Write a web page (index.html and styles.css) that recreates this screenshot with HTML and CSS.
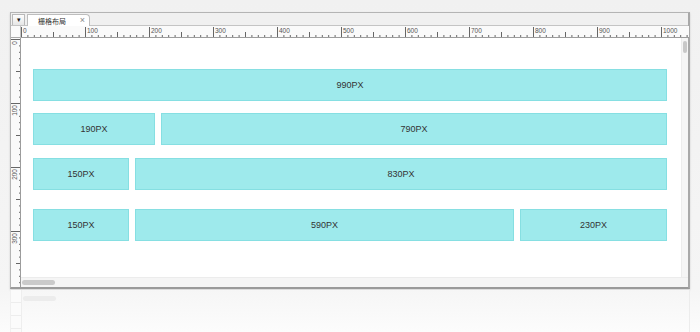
FILE: index.html
```html
<!DOCTYPE html>
<html lang="zh">
<head>
    <meta charset="UTF-8">
    <title>栅格布局</title>
    <link rel="stylesheet" href="styles.css">
</head>
<body>
    <div class="window">
        <div class="tabbar">
            <div class="tab-menu">&#9662;</div>
            <div class="tab">
                <span class="tab-title">栅格布局</span>
                <span class="tab-close">&times;</span>
            </div>
        </div>

        <div class="editor">
            <div class="corner"></div>

            <!-- top ruler: 0.64px per unit -->
            <svg class="ruler-top" width="668" height="12">
                <defs>
                    <pattern id="tickTop" width="64" height="12" patternUnits="userSpaceOnUse">
                        <g stroke="#666" stroke-width="1">
                            <line x1="0.5" y1="1" x2="0.5" y2="12"/>
                            <line x1="6.9" y1="9" x2="6.9" y2="11"/>
                            <line x1="13.3" y1="9" x2="13.3" y2="11"/>
                            <line x1="19.7" y1="9" x2="19.7" y2="11"/>
                            <line x1="26.1" y1="9" x2="26.1" y2="11"/>
                            <line x1="32.5" y1="6" x2="32.5" y2="12"/>
                            <line x1="38.9" y1="9" x2="38.9" y2="11"/>
                            <line x1="45.3" y1="9" x2="45.3" y2="11"/>
                            <line x1="51.7" y1="9" x2="51.7" y2="11"/>
                            <line x1="58.1" y1="9" x2="58.1" y2="11"/>
                        </g>
                    </pattern>
                </defs>
                <rect x="0" y="0" width="668" height="12" fill="url(#tickTop)"/>
                <g class="ruler-label">
                    <text x="2" y="7">0</text>
                    <text x="66" y="7">100</text>
                    <text x="130" y="7">200</text>
                    <text x="194" y="7">300</text>
                    <text x="258" y="7">400</text>
                    <text x="322" y="7">500</text>
                    <text x="386" y="7">600</text>
                    <text x="450" y="7">700</text>
                    <text x="514" y="7">800</text>
                    <text x="578" y="7">900</text>
                    <text x="642" y="7">1000</text>
                </g>
            </svg>

            <!-- left ruler -->
            <svg class="ruler-left" width="10" height="249">
                <defs>
                    <pattern id="tickLeft" width="10" height="64" y="1" patternUnits="userSpaceOnUse">
                        <g stroke="#666" stroke-width="1">
                            <line x1="0" y1="0.5" x2="10" y2="0.5"/>
                            <line x1="8" y1="6.9" x2="10" y2="6.9"/>
                            <line x1="8" y1="13.3" x2="10" y2="13.3"/>
                            <line x1="8" y1="19.7" x2="10" y2="19.7"/>
                            <line x1="8" y1="26.1" x2="10" y2="26.1"/>
                            <line x1="5" y1="32.5" x2="10" y2="32.5"/>
                            <line x1="8" y1="38.9" x2="10" y2="38.9"/>
                            <line x1="8" y1="45.3" x2="10" y2="45.3"/>
                            <line x1="8" y1="51.7" x2="10" y2="51.7"/>
                            <line x1="8" y1="58.1" x2="10" y2="58.1"/>
                        </g>
                    </pattern>
                </defs>
                <rect x="0" y="0" width="10" height="249" fill="url(#tickLeft)"/>
                <g class="ruler-label">
                    <text transform="translate(6 3) rotate(-90)" text-anchor="end">0</text>
                    <text transform="translate(6 67) rotate(-90)" text-anchor="end">100</text>
                    <text transform="translate(6 131) rotate(-90)" text-anchor="end">200</text>
                    <text transform="translate(6 195) rotate(-90)" text-anchor="end">300</text>
                </g>
            </svg>

            <div class="canvas">
                <div class="grid-row first">
                    <div class="cell" style="width: 634px">990PX</div>
                </div>
                <div class="grid-row second">
                    <div class="cell" style="width: 122px">190PX</div>
                    <div class="cell" style="width: 506px">790PX</div>
                </div>
                <div class="grid-row third">
                    <div class="cell" style="width: 96px">150PX</div>
                    <div class="cell" style="width: 532px">830PX</div>
                </div>
                <div class="grid-row fourth">
                    <div class="cell" style="width: 96px">150PX</div>
                    <div class="cell" style="width: 379px">590PX</div>
                    <div class="cell" style="width: 147px">230PX</div>
                </div>
            </div>

            <div class="vscroll"><div class="vthumb"></div></div>
            <div class="hscroll"><div class="hthumb"></div></div>
        </div>
    </div>

    <!-- faint mirror under the window -->
    <div class="reflection">
        <div class="reflection-ruler"></div>
        <div class="reflection-thumb"></div>
    </div>
</body>
</html>
```

FILE: styles.css
```css
body {
    margin: 0;
    width: 700px;
    height: 332px;
    overflow: hidden;
    background: linear-gradient(#f1f1f1, #f5f5f5 290px, #fcfcfc);
    font-family: 'Liberation Sans', Arial, sans-serif;
}

.window {
    box-sizing: border-box;
    width: 680px;
    height: 277px;
    margin: 12px 0 0 10px;
    border: 1px solid #b4b4b4;
    border-bottom: 2px solid #9a9a9a;
    border-right: 2px solid #a8a8a8;
    background: #fff;
    box-shadow: 0 1px 2px rgba(0, 0, 0, 0.15);
}

/* Tab bar */
.tabbar {
    height: 12px;
    display: flex;
    align-items: flex-end;
    gap: 2px;
    background: #f0f0f0;
    border-bottom: 1px solid #c4c4c4;
}

.tab-menu {
    box-sizing: border-box;
    width: 13px;
    height: 11px;
    margin-left: 1px;
    border: 1px solid #b9b9b9;
    border-bottom: none;
    background: linear-gradient(#fdfdfd, #e6e6e6);
    font-size: 7px;
    line-height: 10px;
    text-align: center;
    color: #222;
}

.tab {
    box-sizing: border-box;
    width: 63px;
    height: 12px;
    margin-bottom: -1px;
    padding: 0 4px 0 10px;
    display: flex;
    align-items: center;
    justify-content: space-between;
    background: #fff;
    border: 1px solid #bdbdbd;
    border-bottom: none;
    border-radius: 0 4px 0 0;
}

.tab-title {
    font-family: 'Noto Sans CJK SC', sans-serif;
    font-size: 7px;
    color: #333;
}

.tab-close {
    font-size: 9px;
    line-height: 9px;
    color: #888;
}

/* Editor grid: rulers, canvas, scrollbars */
.editor {
    display: grid;
    grid-template-columns: 10px 660px 7px;
    grid-template-rows: 12px 239px 10px;
}

.corner {
    background: #fafafa;
    border-right: 1px solid #c4c4c4;
    border-bottom: 1px solid #aaa;
    box-sizing: border-box;
}

.ruler-top {
    grid-column: 2 / 4;
    display: block;
    background: #fafafa;
    border-bottom: 1px solid #9c9c9c;
    box-sizing: border-box;
}

.ruler-left {
    grid-row: 2 / 4;
    display: block;
    background: #fafafa;
    border-right: 1px solid #9c9c9c;
    box-sizing: border-box;
}

.ruler-label {
    font-family: 'Liberation Sans', sans-serif;
    font-size: 6.5px;
    fill: #555;
}

.canvas {
    box-sizing: border-box;
    padding: 31px 0 0 12px;
    background: #fff;
}

.grid-row {
    display: flex;
    gap: 6px;
}

.grid-row.second {
    margin-top: 12px;
}

.grid-row.third {
    margin-top: 13px;
}

.grid-row.fourth {
    margin-top: 19px;
}

.cell {
    box-sizing: border-box;
    height: 32px;
    display: flex;
    align-items: center;
    justify-content: center;
    background: #9eeaec;
    border: 1px solid #86dfe2;
    font-size: 9px;
    color: #333;
}

.vscroll {
    background: #f5f5f5;
    border-left: 1px solid #ececec;
    box-sizing: border-box;
    padding: 3px 1px 0 1px;
}

.vthumb {
    height: 12px;
    border-radius: 3px;
    background: #c8c8c8;
}

.hscroll {
    grid-column: 2 / 4;
    box-sizing: border-box;
    padding: 2px 0 0 1px;
    background: #f5f5f5;
    border-top: 1px solid #ececec;
}

.hthumb {
    width: 33px;
    height: 5px;
    border-radius: 3px;
    background: #cacaca;
}

/* Reflection */
.reflection {
    position: relative;
    box-sizing: border-box;
    width: 680px;
    height: 42px;
    margin: 1px 0 0 10px;
    border-left: 1px solid #f0f0f0;
    border-right: 1px solid #ececec;
    background: linear-gradient(#f6f6f6, #fcfcfc);
}

.reflection-ruler {
    width: 10px;
    height: 100%;
    border-right: 1px solid #eeeeee;
    background: repeating-linear-gradient(#fbfbfb 0, #fbfbfb 12px, #ededed 12px, #ededed 13px);
}

.reflection-thumb {
    position: absolute;
    left: 12px;
    top: 6px;
    width: 33px;
    height: 5px;
    border-radius: 3px;
    background: #ececec;
}
```
